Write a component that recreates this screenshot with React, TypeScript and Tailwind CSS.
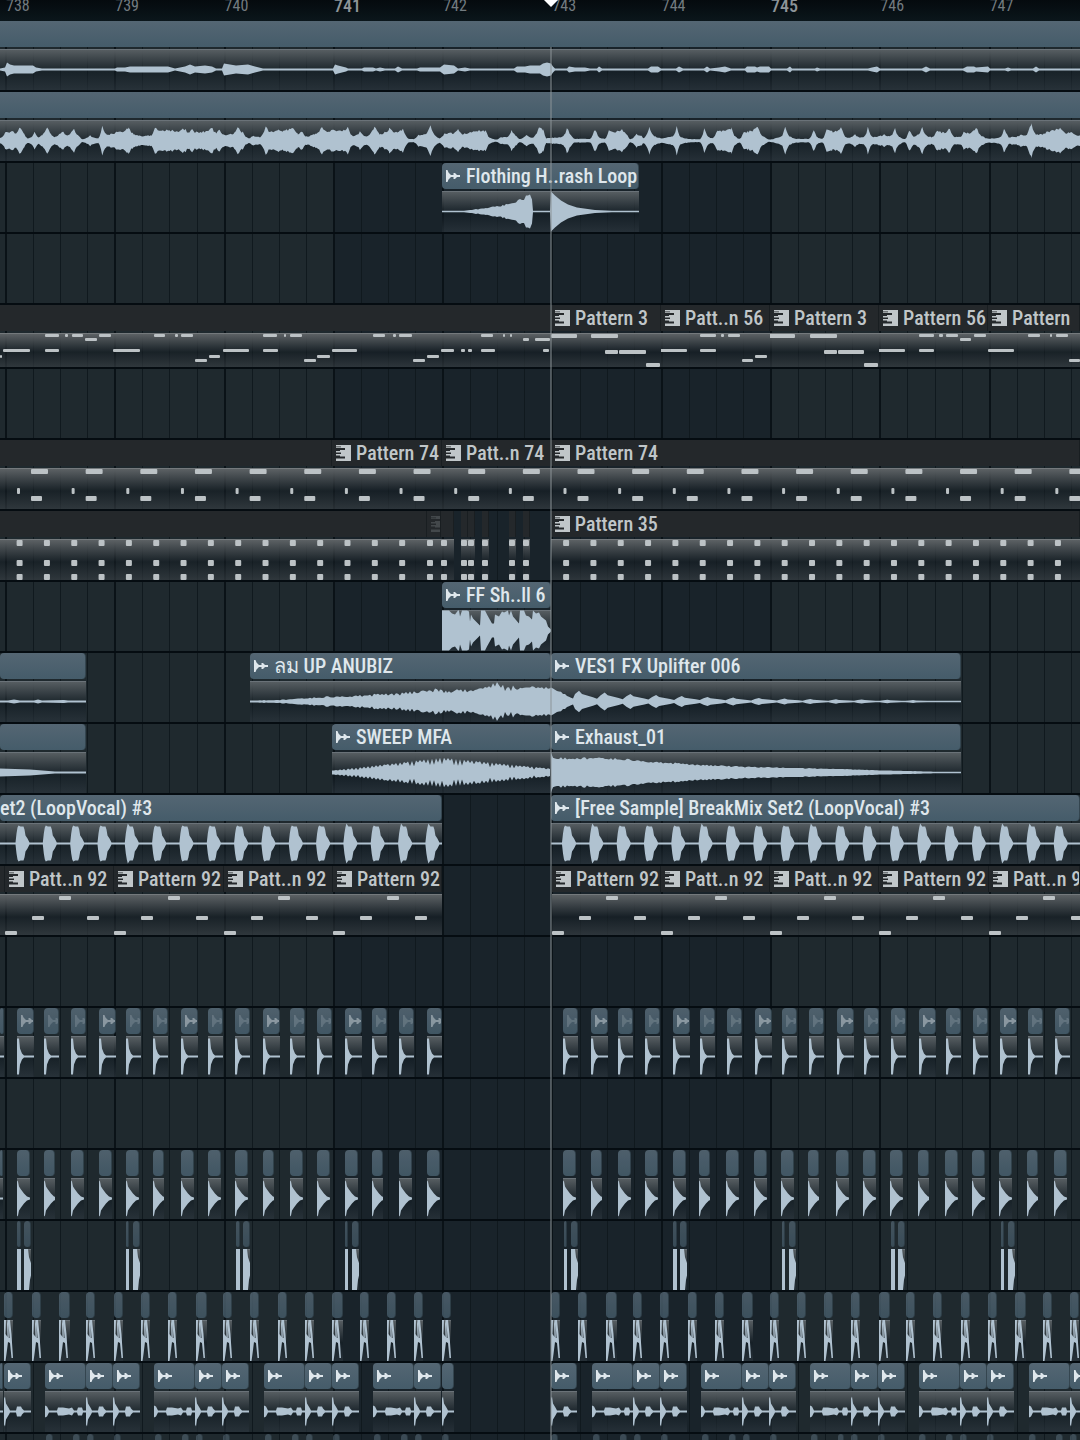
import clsx from "clsx";

type Point = [x: number, amp: number];
type Note = [x: number, y: number, w: number, h: number];
type Kind = "audio" | "pattern";

interface ClipData {
	start: number;
	end: number;
	kind: Kind;
	title?: string;
	icon?: "full" | "faint" | "none";
	wave?: string;
	notes?: Note[];
	tone?: string;
}

// timeline units: the visible range is VIEW units wide, one bar is BAR units
const VIEW = 1080;
const FIRST = 5;
const BAR = 109.3;
const BEAT = BAR / 4;
const BODY = 41;
const MID = 20.5;

const pct = (n: number) => `${(n / VIEW) * 100}%`;
const barAt = (n: number) => Math.round(FIRST + n * BAR);
const range = (from: number, to: number) => Array.from({ length: to - from }, (_, i) => from + i);
const hash = (n: number) => Math.abs((Math.sin(n * 12.9898) * 43758.5453) % 1);

function outline(points: Point[], mid = MID) {
	const top = points.map(([x, a]) => `${x.toFixed(1)} ${(mid - a).toFixed(1)}`);
	const bottom = points.map(([x, a]) => `${x.toFixed(1)} ${(mid + a).toFixed(1)}`).reverse();
	return `M${top.join("L")}L${bottom.join("L")}Z`;
}

// resamples an envelope and roughens its edge; sharp > 1 narrows the peaks
function rough(points: Point[], amount: number, step = 2, sharp = 1): Point[] {
	const out: Point[] = [];
	for (let i = 0; i < points.length - 1; i++) {
		const [x0, a0] = points[i];
		const [x1, a1] = points[i + 1];
		for (let x = x0; x < x1; x += step) {
			const t = (x - x0) / (x1 - x0);
			const a = a1 > a0 ? a0 + (a1 - a0) * Math.pow(t, sharp) : a1 + (a0 - a1) * Math.pow(1 - t, sharp);
			out.push([x, Math.max(0.7, a * (1 - hash(x) * amount))]);
		}
	}
	out.push(points[points.length - 1]);
	return out;
}

const pairs = (text: string): Point[] =>
	text.trim().split(/\s+/).map((p) => {
		const [x, a] = p.split(":");
		return [Number(x), Number(a)];
	});

const vocal = pairs(`0:1 5:2 7:7 10:5 14:4 33:4 36:2 42:1 115:1 117:2 125:2 130:3 150:3 168:3 175:1 185:3 190:5 195:3
205:4 212:3 216:1 222:1 224:6 230:5 236:4 248:5 255:3 263:1 333:1 335:5 338:4 346:2 348:1 362:1 364:2 373:2 376:1 380:2 385:1
395:1 398:3 402:1 417:1 420:2 430:2 440:2 444:5 454:4 458:1 465:2 470:1 514:1 517:3 525:3 530:4 540:4 543:6 547:7 551:6 553:3
555:1 567:1 569:3 575:2 585:2 590:1 597:1 599:3 602:1 648:1 651:3 658:3 661:1 676:1 679:3 683:1 704:1 707:3 710:1 719:2 725:3
731:1 745:1 747:3 755:3 757:2 760:3 769:3 771:1 787:1 790:3 792:1 815:1 817:2 820:1 868:1 872:2 877:3 880:1 922:1 926:3 930:1
963:1 967:3 974:3 976:2 988:3 990:1 1005:1 1008:2 1011:1 1033:1 1036:3 1039:1 1080:1`);

// drawn on a finer grid: 3136 x 123
const lead = pairs(`0:8 15:28 35:33 48:24 57:47 70:25 80:8 90:12 100:32 112:12 122:20 137:48 150:20 160:12 180:33 195:18 215:38
228:18 240:5 262:18 275:10 285:8 297:45 310:20 325:24 345:30 360:30 373:46 390:22 410:15 440:18 450:46 465:32 480:34 500:36
515:32 535:40 550:28 558:38 570:28 590:30 617:42 628:26 638:38 650:20 680:24 690:46 705:28 722:8 735:18 755:12 772:47 785:30
797:34 820:34 852:44 865:24 875:34 890:14 915:24 935:44 950:30 965:38 990:34 1010:44 1025:15 1045:28 1065:15 1087:47 1105:22
1130:40 1150:28 1170:36 1190:5 1200:5 1215:18 1235:20 1250:50 1262:20 1275:8 1290:24 1320:26 1330:36 1345:22 1375:32 1410:34
1425:8 1440:4 1455:12 1475:12 1485:38 1500:15 1510:5 1528:18 1545:10 1555:20 1565:47 1578:35 1586:8 1603:10 1628:12 1638:18
1646:46 1658:20 1668:6 1713:6 1728:40 1743:10 1756:6 1768:38 1788:30 1806:40 1823:18 1830:5 1848:22 1863:15 1868:8 1885:46
1903:15 1918:8 1953:15 1965:46 1978:12 2008:5 2033:5 2045:40 2058:12 2068:8 2083:34 2103:32 2124:40 2138:12 2148:6 2160:32
2173:30 2200:44 2218:15 2233:4 2268:14 2280:44 2293:15 2313:6 2348:6 2363:38 2376:10 2388:6 2400:38 2418:30 2442:46 2456:12
2468:10 2483:20 2498:10 2508:14 2520:42 2536:12 2553:15 2568:20 2583:14 2599:40 2613:12 2628:5 2640:38 2653:15 2663:18 2678:47
2693:14 2708:12 2718:30 2743:28 2758:40 2773:12 2788:12 2798:28 2818:26 2834:46 2853:15 2868:7 2903:10 2917:42 2930:12
2943:12 2963:18 2978:18 2995:60 3008:22 3023:20 3043:32 3078:40 3098:26 3113:28 3136:16`);

const crash = outline([
	...rough(pairs("0:0.7 22:1 45:4 62:7 76:12 84:16"), 0.25),
	...pairs("86:16 88:17 90:12 91:0.7 108:0.7 109:20 113:16 119:11 126:7 135:4 153:1.5 170:0.7 197:0.7"),
]);
const shell = outline(pairs(`0:20 7:20 10:17 13:16 16:20 17:20 18:14 20:20 25:20 27:19 28:9 29:16 31:12 38:5 39:20 43:20 45:16 50:7
52:7 53:16 57:14 60:19 62:18 66:20 67:15 69:20 71:14 77:7 78:20 82:20 84:15 87:14 90:11 91:20 94:17 97:18 99:14 104:10 106:4 109:1`));
const riser = outline(rough(pairs(`0:1 30:2 60:4 82:6 110:7 150:9 165:11 190:14 197:12 225:14 247:20 255:16 270:16 280:18
290:15 301:14`), 0.35));
const uplift = outline([
	...rough(pairs("0:14 8:11 22:3"), 0.15),
	...range(0, 14).flatMap((i): Point[] => {
		const a = 10 * Math.pow(0.83, i) + 0.7;
		return [[24 + i * 25.7, a * 0.7], [28 + i * 25.7, a], [31 + i * 25.7, a * 0.7], [42 + i * 25.7, Math.max(0.7, a * 0.4)], [46 + i * 25.7, Math.max(0.7, a * 0.25)]];
	}),
	[410, 0.7],
]);
const sweep = outline(
	range(0, 110).map((i): Point => {
		const x = i * 2;
		const env = x < 110 ? 2 + (x / 110) * 13 : 15 - ((x - 110) / 109) * 11;
		return [x, i % 2 === 0 ? env : env * (0.5 + hash(i) * 0.4)];
	}),
);
const exhaust = outline(rough(pairs("0:20 2:15 30:16 80:14 110:11 150:8 200:6 280:4 340:2 390:0.8 410:0.7"), 0.18));

function hits(count: number, width: number, offset: number) {
	const pts: Point[] = [[0, 1]];
	range(0, count).forEach((i) => {
		const s = offset + i * BEAT;
		const loud = hash(i + offset) > 0.7 ? 20 : 18;
		pts.push([s, 1], [s + 1, 10], [s + 2, 16], [s + 3, loud], [s + 5, 17], [s + 8, 17], [s + 9, 14], [s + 10, 8], [s + 12, 5], [s + 14, 1]);
	});
	return outline([...pts.filter(([x]) => x < width), [width, 1]]);
}

const kick = outline(pairs("0:18 2:18 3:8 5:3 7:1 17:1"));
const clap = outline(pairs("0:18 1:17 2:12 4:9 7:5 10:2 13:1"));
const burst = "M0 0H4V41H0Z";
const tail = "M0 0H4L5 8L7 14L8 22L6 31L5 41H0Z";
const hatWave = "M0 0H2L1.500 14L3.500 17L3 4L3.500 0H6L7.500 14L9 38H7.500L6 23L4 22L2.500 34L1.500 41H0ZM4.500 4L4.800 18H5.600Z";
const shakerLong = outline(pairs("0:6 2:5 4:1 12:1 13:4 18:4 24:3 27:4 29:1 32:1 33:4 37:4 38:1 41:1"));
const shakerShort = outline(pairs("0:13 1:15 2:8 5:3 6:1 12:1 13:5 17:5 18:3 20:1 28:1"));

function leadNotes(): Note[] {
	const rows: [number, number, string][] = [
		[1, 3, `45-59 65-68 72-83 99-111 154-165 175-178 181-193 263-277 284-286 290-302 373-385 393-396 399-412 481-493
			503-505 510-512 700-716 721-724 728-740 919-934 939-943 946-958 974-986 1028-1040 1050-1052 1056-1068`],
		[1, 4, "551-577 591-618 769-795 810-837"],
		[5, 3, "85-97 523-529 535-550 960-971"],
		[16, 3, `3-30 45-59 113-140 223-249 263-278 332-357 441-454 461-465 468-472 481-495 543-549 660-687 700-716
			878-905 919-934 988-1014`],
		[17, 4, "605-618 619-646 824-837 838-864"],
		[22, 3, "0-2 209-220 317-330 427-439 755-767"],
		[26, 3, "195-207 304-316 413-425 742-753 1069-1080"],
		[30, 4, "646-660 864-878"],
	];
	return rows.flatMap(([y, h, text]) =>
		text.trim().split(/\s+/).map((part): Note => {
			const [a, b] = part.split("-").map(Number);
			return [a, y, b - a, h];
		}),
	);
}

const bassNotes = range(0, 20).flatMap((i): Note[] => {
	const x = i * BEAT * 2;
	return [[x + 31, 1, 17, 5], [x + 17, 20, 3, 6], [x + 31, 28, 11, 5]];
});
const dots = (x: number): Note[] => [[x - 3, 1, 6, 6], [x - 3, 21, 6, 6], [x - 3, 35, 6, 6]];
const hatNotes = range(0, 16).flatMap((i) => dots(19.6 + i * BEAT));
const hatNotesRight = range(20, 40).flatMap((i) => dots(19.6 + i * BEAT));
const stabNotes = range(0, 10).flatMap((i): Note[] => {
	const x = barAt(i);
	return [[x, 37, 12, 4], [x + 27, 22, 12, 4], [x + 54, 2, 12, 4], [x + 82, 22, 12, 4]];
});

// cuts a part's notes to one clip and moves them to its origin
const cut = (notes: Note[], start: number, end: number): Note[] =>
	notes.filter(([x]) => x >= start - 2 && x < end - 2).map(([x, y, w, h]) => [x - start, y, w, h]);

const pattern = (start: number, end: number, notes: Note[], title?: string): ClipData => ({
	start, end, title, kind: "pattern", notes: cut(notes, start, end),
});
const audio = (start: number, end: number, wave: string, title?: string): ClipData => ({
	start, end, title, wave, kind: "audio",
});

const beats = [...range(0, 16), ...range(20, 39)];
const lead5 = leadNotes();

const kicks: ClipData[] = [-1, ...beats].map((i) => ({
	start: Math.max(0, Math.round(16.8 + i * BEAT)),
	end: i < 0 ? 4 : Math.min(Math.round(16.8 + i * BEAT + (i % 3 === 0 ? 17 : 15)), i === 15 ? 442 : VIEW),
	kind: "audio",
	wave: i < 0 ? "M0 19.5H17V21.5H0Z" : kick,
	icon: i < 0 ? "none" : i % 3 === 0 ? "full" : "faint",
	tone: "opacity-90",
}));
const claps: ClipData[] = [-1, ...beats].map((i) => ({
	start: Math.max(0, Math.round(16.8 + i * BEAT)),
	end: i < 0 ? 3 : Math.round(16.8 + i * BEAT) + (i % 4 === 1 ? 11 : 13),
	kind: "audio",
	wave: i < 0 ? "M0 19.5H17V21.5H0Z" : clap,
	icon: "none",
	tone: "opacity-90",
}));
const fills: ClipData[] = [0, 1, 2, 3, 5, 6, 7, 8, 9].flatMap((i): ClipData[] => {
	const x = Math.round(17 + i * BAR);
	return [
		{ start: x, end: x + (i % 2 ? 3 : 4), kind: "audio", wave: burst, icon: "none", tone: "opacity-70" },
		{ start: x + 7, end: x + 14, kind: "audio", wave: tail, icon: "none", tone: "opacity-70" },
	];
});
const hats: ClipData[] = [...range(0, 17), ...range(20, 40)].map((i) => ({
	start: Math.round(4.4 + i * BEAT),
	end: Math.round(4.4 + i * BEAT) + (i % 5 === 2 ? 11 : 9),
	kind: "audio",
	wave: hatWave,
	icon: "none",
	tone: "opacity-80",
}));
const shaker: ClipData[] = [
	audio(0, 3, "M0 19.5H41V21.5H0Z"),
	audio(4, 31, shakerShort),
	...[0, 1, 2, 3, 5, 6, 7, 8, 9].flatMap((i) => {
		const x = Math.round(i * BAR);
		const clips = [audio(x + 45, x + 86, shakerLong), audio(x + 86, x + 113, shakerShort)];
		if (i === 3) return [...clips, { ...audio(x + 114, x + 126, shakerShort), icon: "none" as const }];
		return i === 9 ? [audio(x + 45, x + 86, shakerLong), audio(x + 86, VIEW + 16, shakerShort)] : [...clips, audio(x + 113, x + 140, shakerShort)];
	}),
	audio(551, 577, shakerShort),
].sort((a, b) => a.start - b.start);
const ghosts: ClipData[] = range(0, 10).flatMap((i) =>
	[41, 68, 82, 109]
		.filter((d) => (i !== 4 || d === 109) && i * BAR + d < 1070)
		.map((d): ClipData => {
			const x = Math.round(FIRST + i * BAR + d);
			return { start: x, end: x + 7, kind: "audio", icon: "none", tone: "opacity-60" };
		}),
);

const stabTitles = ["Patt..n 92", "Pattern 92", "Patt..n 92", "Pattern 92", "", "Pattern 92", "Patt..n 92", "Patt..n 92", "Pattern 92", "Patt..n 92"];

const tracks: { clips: ClipData[]; short?: boolean }[] = [
	{ clips: [audio(0, VIEW, outline(vocal))] },
	{ clips: [audio(0, VIEW, "lead")] },
	{ clips: [audio(442, 639, crash, "Flothing H..rash Loop")] },
	{ clips: [] },
	{
		short: true,
		clips: [
			pattern(0, 551, lead5),
			pattern(551, 661, lead5, "Pattern 3"),
			pattern(661, 770, lead5, "Patt..n 56"),
			pattern(770, 879, lead5, "Pattern 3"),
			pattern(879, 988, lead5, "Pattern 56"),
			pattern(988, VIEW, lead5, "Pattern"),
		],
	},
	{ clips: [] },
	{
		clips: [
			pattern(0, 332, bassNotes),
			pattern(332, 442, bassNotes, "Pattern 74"),
			pattern(442, 551, bassNotes, "Patt..n 74"),
			pattern(551, VIEW, bassNotes, "Pattern 74"),
		],
	},
	{
		clips: [
			pattern(0, 427, hatNotes),
			{ ...pattern(427, 441, dots(430)), icon: "faint" },
			pattern(441, 454, dots(444)),
			...[464, 471, 485, 512, 526].map((x) => pattern(x - 3, x + 4, dots(x))),
			pattern(551, VIEW, hatNotesRight, "Pattern 35"),
		],
	},
	{ clips: [audio(442, 551, shell, "FF Sh..ll 6")] },
	{
		clips: [
			{ ...audio(0, 86, outline(pairs("0:1 8:1 14:2 20:1 34:1 38:2 42:1 64:1.5 68:1 86:1"))), icon: "none" },
			audio(250, 551, riser, "ลม UP ANUBIZ"),
			audio(551, 961, uplift, "VES1 FX Uplifter 006"),
		],
	},
	{
		clips: [
			{ ...audio(0, 86, outline(pairs("0:4 30:3 55:1 86:1"))), icon: "none" },
			audio(332, 551, sweep, "SWEEP MFA"),
			audio(551, 961, exhaust, "Exhaust_01"),
		],
	},
	{
		clips: [
			{ ...audio(0, 442, hits(16, 442, 15.5), "et2 (LoopVocal) #3"), icon: "none" },
			audio(551, VIEW, hits(20, 529, 11), "[Free Sample] BreakMix Set2 (LoopVocal) #3"),
		],
	},
	{
		clips: [
			pattern(0, 5, []),
			...stabTitles.flatMap((title, i) => (title ? [pattern(barAt(i), Math.min(barAt(i + 1), VIEW), stabNotes, title)] : [])),
		],
	},
	{ clips: [] },
	{ clips: kicks },
	{ clips: [] },
	{ clips: claps },
	{ clips: fills },
	{ clips: hats },
	{ clips: shaker },
	{ clips: ghosts },
];

function AudioIcon({ className }: { className?: string }) {
	return (
		<svg viewBox="0 0 14 12" className={clsx("h-3 w-3.5 shrink-0 fill-current", className)} aria-hidden="true">
			<path d="M0 0H1.500L2.500 2.500L5 5H7.500V3H9L11 5H14V7H11L9 9H7.500V7H5L2.500 9.500L1.500 12H0Z" />
		</svg>
	);
}

function PatternIcon({ className }: { className?: string }) {
	return (
		<svg viewBox="0 0 15 16" className={clsx("h-4 w-[15px] shrink-0 fill-current", className)} aria-hidden="true">
			<path d="M0 0H15V16H0V13.500H9V11.500H4V10.500H0V9H5V7.500H0V6H4V5H9V3H0V2.200H5V1.400H0Z" />
		</svg>
	);
}

function ClipHeader({ clip }: { clip: ClipData }) {
	const width = clip.end - clip.start;
	const isAudio = clip.kind === "audio";
	const icon = clip.icon ?? (clip.title || (isAudio && width > 20 && width < 50) ? "full" : "none");
	return (
		<div
			className={clsx(
				"flex h-[26px] shrink-0 items-center overflow-hidden whitespace-nowrap text-xl leading-6 font-medium",
				isAudio
					? "gap-1.5 bg-linear-to-b from-[#546673] to-[#455c6a] text-[#dfe7ec]"
					: "gap-[5px] border-r border-[#191e21] bg-[#24282b] text-[#c0c6c9]",
				isAudio && width < VIEW && "rounded-sm border-r border-[#34454f]",
				isAudio && width < 20 && "rounded-md",
				icon === "none" ? "pl-0" : "pl-1",
				clip.tone,
			)}
		>
			{icon !== "none" && isAudio && <AudioIcon className={clsx(width < 20 && (icon === "full" ? "opacity-50" : "opacity-20"))} />}
			{icon !== "none" && !isAudio && <PatternIcon className={clsx(icon === "faint" && "opacity-20")} />}
			{clip.title && <span>{clip.title}</span>}
		</div>
	);
}

function ClipBody({ clip, short }: { clip: ClipData; short?: boolean }) {
	const width = clip.end - clip.start;
	const isLead = clip.wave === "lead";
	const height = short ? 34 : BODY;
	return (
		<div
			className={clsx(
				"mt-0.5 min-h-0 flex-1 border-t",
				clip.kind === "audio"
					? "border-[#6a7278] bg-linear-to-b from-[#565d61] via-[#121c23]/50 via-55% to-[#2b353d]/70"
					: "border-[#74797c] bg-linear-to-b from-[#5c6164] via-[#151d23]/60 via-55% to-[#363d42]/70",
			)}
		>
			<svg
				viewBox={isLead ? "0 0 3136 123" : `0 0 ${width} ${height}`}
				preserveAspectRatio="none"
				className={clsx("-mt-px block w-full", short ? "h-[34px]" : "h-[41px]", clip.kind === "audio" ? "fill-[#b0c2d0]" : "fill-[#bcc2c5]")}
				aria-hidden="true"
			>
				{isLead && <path d={outline(rough(lead, 0.22, 4, 1.7), 62)} />}
				{!isLead && clip.wave && <path d={clip.wave} />}
				{clip.notes?.map(([x, y, w, h], i) => <rect key={i} x={x} y={y} width={w} height={h} rx={1} />)}
			</svg>
		</div>
	);
}

function Track({ clips, short }: { clips: ClipData[]; short?: boolean }) {
	return (
		<section className={clsx("flex shrink-0 overflow-hidden border-b-2 border-[#050c11]", short ? "h-16" : "h-[71px]")}>
			{clips.map((clip, i) => (
				<div
					key={i}
					className="flex shrink-0 flex-col"
					style={{ width: pct(clip.end - clip.start), marginLeft: pct(clip.start - (i ? clips[i - 1].end : 0)) }}
				>
					<ClipHeader clip={clip} />
					<ClipBody clip={clip} short={short} />
				</div>
			))}
		</section>
	);
}

function Ruler() {
	return (
		<header className="flex h-[21px] shrink-0 overflow-hidden bg-linear-to-b from-[#050a0e] to-[#0b161b]">
			<div className="shrink-0" style={{ width: pct(FIRST) }} />
			{range(738, 748).map((bar) => (
				<span
					key={bar}
					className={clsx(
						"shrink-0 pl-px leading-3",
						bar % 4 === 1 ? "text-lg font-medium text-[#8d9498]" : "text-base text-[#737b80]",
					)}
					style={{ width: pct(BAR) }}
				>
					{bar}
				</span>
			))}
		</header>
	);
}

function Grid() {
	return (
		<div className="absolute inset-0 -z-10 flex overflow-hidden bg-[#1f292e]">
			<div className="shrink-0" style={{ width: pct(FIRST) }} />
			{range(0, 10).map((bar) => (
				<div
					key={bar}
					className={clsx("flex shrink-0 border-l-2 border-[#0a1217]", bar > 2 && bar < 7 ? "bg-[#19232a]" : "bg-[#1f292e]")}
					style={{ width: pct(BAR) }}
				>
					{range(0, 4).map((beat) => (
						<div key={beat} className={clsx("flex-1", beat > 0 && "border-l border-[#10191e]")} />
					))}
				</div>
			))}
		</div>
	);
}

export default function App() {
	return (
		<main className="relative isolate flex h-screen flex-col overflow-hidden bg-[#1f292e] font-['Liberation_Sans_Narrow','Roboto_Condensed','Liberation_Sans',sans-serif]">
			<Ruler />
			<div className="relative isolate flex flex-1 flex-col overflow-hidden">
				<Grid />
				{tracks.map((track, i) => <Track key={i} {...track} />)}
			</div>
			<div className="pointer-events-none absolute inset-y-0 flex w-4 -translate-x-1/2 flex-col items-center" style={{ left: pct(551) }}>
				<svg viewBox="0 0 16 7" className="h-[7px] w-4 shrink-0 fill-white" aria-hidden="true">
					<path d="M1 0H15L8 7Z" />
				</svg>
				<div className="mt-10 w-0.5 flex-1 bg-[#8b9498]/50" />
			</div>
		</main>
	);
}
